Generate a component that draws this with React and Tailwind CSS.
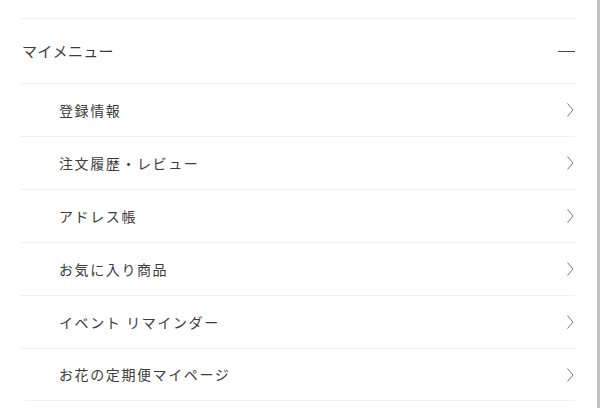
import React from "react";

const items = [
  "登録情報",
  "注文履歴・レビュー",
  "アドレス帳",
  "お気に入り商品",
  "イベント リマインダー",
  "お花の定期便マイページ",
];

function Chevron() {
  return (
    <svg width="8" height="16" viewBox="0 0 8 16" fill="none" className="shrink-0">
      <path d="M1.5 1.5 L7 8 L1.5 14.5" stroke="#777" strokeWidth="1" />
    </svg>
  );
}

export default function App() {
  return (
    <div
      className="relative w-[600px] h-[408px] bg-white overflow-hidden text-[#3c3c3c]"
      style={{ fontFamily: '"Noto Sans CJK JP", "Noto Sans", sans-serif' }}
    >
      <div className="absolute right-0 top-0 h-full w-[3px] bg-[#c2c2c2]" />
      <div className="pt-[18px] pl-[20px] pr-[25px]">
        <div className="border-t border-[#f0f0f0]" />
        <div className="h-[65px] flex items-center justify-between border-b border-[#f0f0f0] pl-[2px]">
          <span className="text-[15px] tracking-[0.3px]">マイメニュー</span>
          <div className="w-[17px] h-[1.5px] bg-[#444] mt-[1px]" />
        </div>
        {items.map((t, i) => {
          const last = i === items.length - 1;
          return (
            <div
              key={t}
              className={
                last
                  ? "h-[52px] flex items-center justify-between border-b border-[#f0f0f0] ml-[5px] pl-[34px] pr-[1px]"
                  : "h-[53px] flex items-center justify-between border-b border-[#f0f0f0] pl-[39px] pr-[1px]"
              }
            >
              <span className="text-[14px] tracking-[1.6px]">{t}</span>
              <Chevron />
            </div>
          );
        })}
      </div>
    </div>
  );
}
